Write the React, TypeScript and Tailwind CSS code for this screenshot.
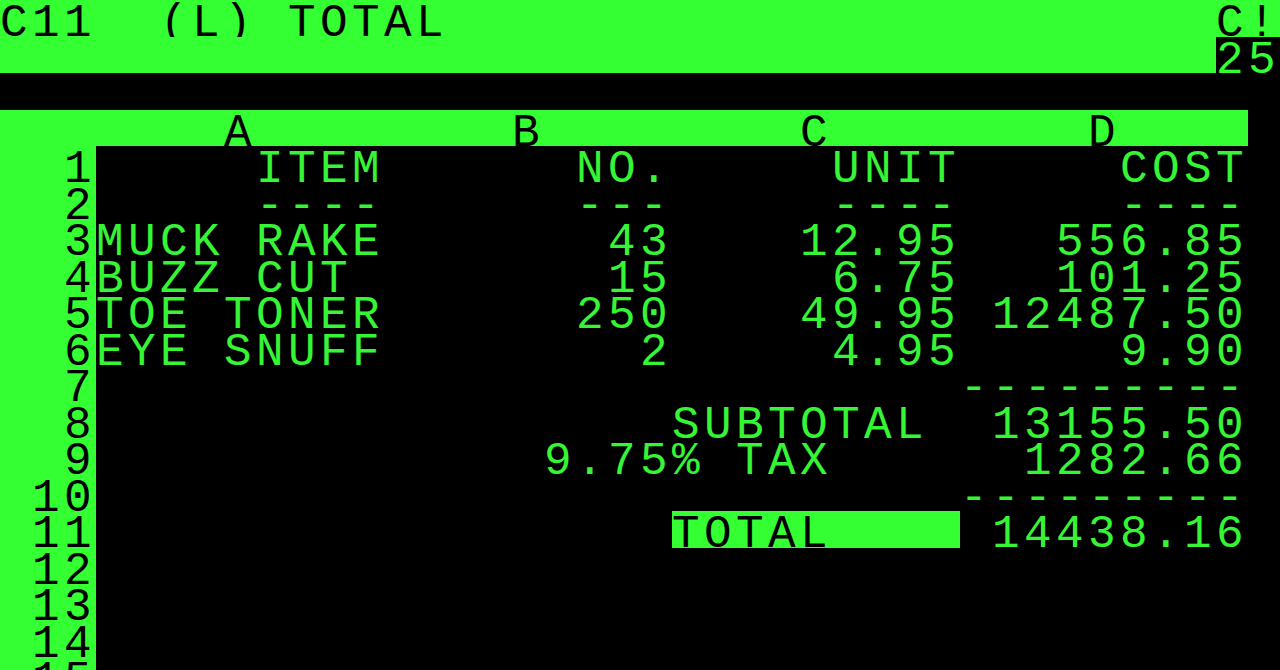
import React from 'react';

// Apple II style VisiCalc screen: 40 chars x 32px, lines 36.5px tall
const GREEN = 'bg-[#33ff33]';

const cols = ['A', 'B', 'C', 'D'];

const rows: string[][] = [
  ['     ITEM', '      NO.', '     UNIT', '     COST'],
  ['     ----', '      ---', '     ----', '     ----'],
  ['MUCK RAKE', '       43', '    12.95', '   556.85'],
  ['BUZZ CUT ', '       15', '     6.75', '   101.25'],
  ['TOE TONER', '      250', '    49.95', ' 12487.50'],
  ['EYE SNUFF', '        2', '     4.95', '     9.90'],
  ['', '', '', '---------'],
  ['', '', 'SUBTOTAL ', ' 13155.50'],
  ['', '     9.75', '% TAX    ', '  1282.66'],
  ['', '', '', '---------'],
  ['', '', 'TOTAL    ', ' 14438.16'],
  ['', '', '', ''],
  ['', '', '', ''],
  ['', '', '', ''],
  ['', '', '', ''],
];

const txt =
  "font-['Liberation_Mono','DejaVu_Sans_Mono',monospace] text-[46px] tracking-[4.4px] leading-[48px] whitespace-pre";

const Line: React.FC<{ className?: string; children?: React.ReactNode }> = ({ className = '', children }) => (
  <div className={`flex h-[36.5px] shrink-0 ${className}`}>{children}</div>
);

export default function App() {
  return (
    <div className="w-[1280px] h-[670px] overflow-hidden bg-black flex flex-col">
      {/* status line */}
      <Line className={`${GREEN} justify-between text-black`}>
        <span className={txt}>C11  (L) TOTAL</span>
        <span className={txt}>C!</span>
      </Line>
      {/* entry line */}
      <Line className={`${GREEN} justify-end`}>
        <span className={`${txt} w-[64px] bg-black text-[#33ff33]`}>25</span>
      </Line>
      {/* prompt line */}
      <Line className="bg-black" />
      {/* column headings */}
      <Line>
        <div className={`flex w-[1248px] ${GREEN} text-black`}>
          <div className="w-[96px]" />
          {cols.map((c) => (
            <div key={c} className={`w-[288px] ${txt}`}>{`    ${c}    `}</div>
          ))}
        </div>
        <div className="flex-1 bg-black" />
      </Line>
      {/* sheet rows */}
      {rows.map((cells, i) => (
        <Line key={i}>
          <div className={`w-[96px] ${GREEN} text-black text-right ${txt} tracking-[0px]`}>
            <span className="tracking-[4.4px] mr-[-4.4px] pr-[4.4px]">{String(i + 1)}</span>
          </div>
          {cells.map((cell, j) => {
            const cursor = i === 10 && j === 2;
            return (
              <div
                key={j}
                className={`w-[288px] ${txt} ${cursor ? `${GREEN} text-black` : 'text-[#35f535]'}`}
              >
                {cell}
              </div>
            );
          })}
          <div className="flex-1 bg-black" />
        </Line>
      ))}
    </div>
  );
}
